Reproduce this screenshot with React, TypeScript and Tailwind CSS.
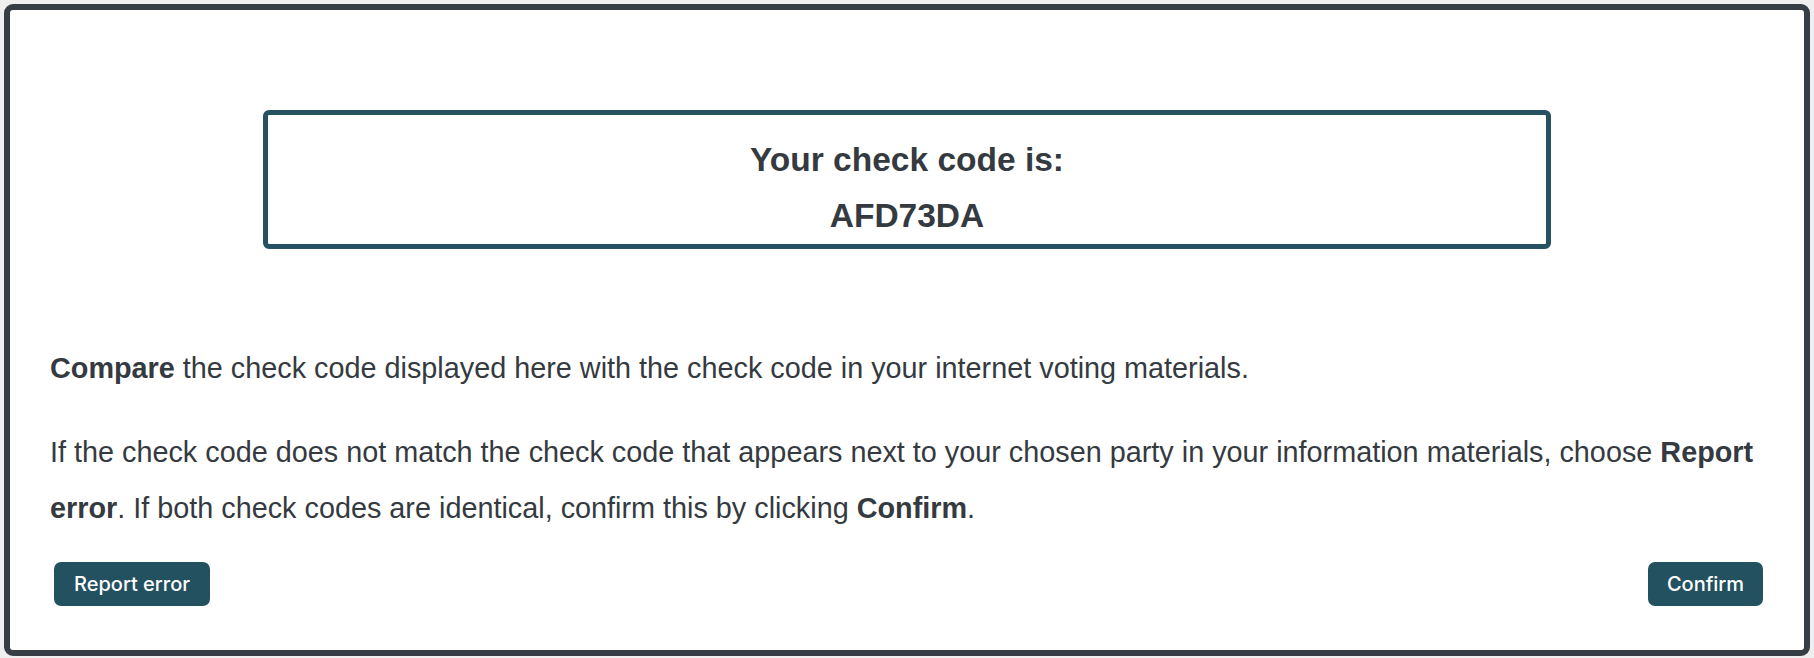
export default function App() {
  return (
    <div className="min-h-screen bg-[#efefef] p-[4px] pb-[3px] font-['Liberation_Sans',Arial,sans-serif] text-[#343a40]">
      <div className="rounded-[9px] border-[6px] border-[#373d45] bg-white pt-[100px] pb-[44px] px-[40px]">
        <div className="mx-[213px] rounded-[6px] border-[5px] border-[#255160] pt-[17px] text-center text-[33.5px] font-bold leading-[56px]">
          <div>Your check code is:</div>
          <div>AFD73DA</div>
        </div>

        <div className="mt-[91px] text-[28.8px] leading-[56px]">
          <p>
            <b>Compare</b> the check code displayed here with the check code in
            your internet voting materials.
          </p>
          <p className="mt-[28px]">
            If the check code does not match the check code that appears next
            to your chosen party in your information materials, choose{" "}
            <b>Report error</b>. If both check codes are identical, confirm
            this by clicking <b>Confirm</b>.
          </p>
        </div>

        <div className="mt-[26px] flex items-center justify-between pl-[4px] pr-[1px] font-['Inter',sans-serif]">
          <button className="h-[44px] w-[156px] rounded-[7px] bg-[#23515f] text-[20px] font-medium text-white">
            Report error
          </button>
          <button className="h-[44px] w-[115px] rounded-[7px] bg-[#23515f] text-[20px] font-medium text-white">
            Confirm
          </button>
        </div>
      </div>
    </div>
  );
}
